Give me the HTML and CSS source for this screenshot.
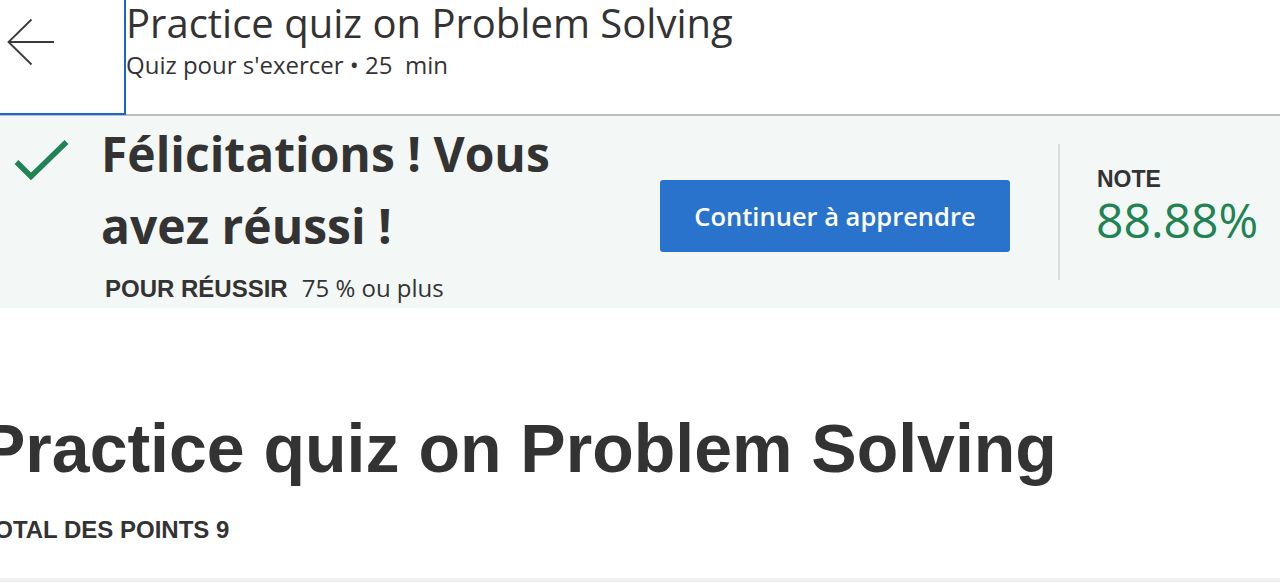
FILE: index.html
```html
<!DOCTYPE html>
<html lang="fr">
<head>
<meta charset="utf-8">
<title>Practice quiz on Problem Solving</title>
<link rel="stylesheet" href="styles.css">
</head>
<body>
<header class="topbar">
  <button class="back" aria-label="Retour">
    <svg width="60" height="80" viewBox="0 0 60 80" class="back-icon">
      <path d="M54 42 H9 M31.5 19.5 L8.5 42 L31.5 64.5" fill="none" stroke="#3a3a3a" stroke-width="1.8"/>
    </svg>
  </button>
  <div class="head-text">
    <h1 class="head-title">Practice quiz on Problem Solving</h1>
    <p class="head-sub">Quiz pour s'exercer • 25&nbsp; min</p>
  </div>
</header>

<section class="result">
  <div class="result-left">
    <div class="check-col">
      <svg class="check" width="60" height="48" viewBox="0 0 60 48">
        <polyline points="4.5,26 19,40.5 54.5,6" fill="none" stroke="#1f8354" stroke-width="5.5"/>
      </svg>
    </div>
    <div class="result-text">
      <h2 class="congrats">Félicitations ! Vous avez réussi !</h2>
      <p class="pass"><span class="pass-label">POUR RÉUSSIR</span><span class="pass-val">75 % ou plus</span></p>
    </div>
  </div>
  <button class="cta">Continuer à apprendre</button>
  <div class="divider"></div>
  <div class="note">
    <div class="note-label">NOTE</div>
    <div class="note-val">88.88%</div>
  </div>
</section>

<main class="content">
  <h2 class="quiz-title">Practice quiz on Problem Solving</h2>
  <p class="points">TOTAL DES POINTS 9</p>
</main>
<div class="footer-band"></div>
</body>
</html>
```

FILE: styles.css
```css
html, body {
  margin: 0;
  padding: 0;
  background: #ffffff;
  overflow: hidden;
}

body {
  font-family: "Open Sans", "Liberation Sans", sans-serif;
  color: #333333;
  width: 1280px;
  height: 582px;
}

.topbar {
  display: flex;
  height: 114px;
  border-bottom: 2px solid #bdbdbd;
}

.back {
  flex: 0 0 auto;
  width: 126px;
  height: 115px;
  box-sizing: border-box;
  padding: 0;
  margin: 0;
  border: 0;
  border-right: 2px solid #1566d6;
  border-bottom: 2px solid #1566d6;
  background: #ffffff;
  display: flex;
  align-items: flex-start;
  justify-content: flex-start;
  position: relative;
  z-index: 1;
}

.back-icon {
  display: block;
}

.head-text {
  display: flex;
  flex-direction: column;
}

.head-title {
  margin: 0;
  font-size: 40px;
  font-weight: 400;
  line-height: 45px;
  color: #333333;
  white-space: nowrap;
}

.head-sub {
  margin: 5px 0 0 0;
  font-size: 24px;
  line-height: 30px;
  color: #333333;
  white-space: nowrap;
}

.result {
  display: flex;
  align-items: flex-start;
  height: 192px;
  background: #f3f8f6;
}

.result-left {
  display: flex;
  width: 660px;
  flex: 0 0 auto;
}

.check-col {
  width: 101px;
  flex: 0 0 auto;
}

.check {
  display: block;
  margin: 20px 0 0 12px;
}

.result-text {
  padding-top: 2px;
}

.congrats {
  margin: 0;
  font-size: 48px;
  font-weight: 700;
  line-height: 72px;
  color: #333333;
  width: 500px;
}

.pass {
  margin: 8px 0 0 4px;
  line-height: 36px;
  white-space: nowrap;
  display: flex;
  align-items: baseline;
}

.pass-label {
  font-family: "Liberation Sans", Arial, sans-serif;
  font-weight: 700;
  font-size: 24px;
  color: #333333;
}

.pass-val {
  margin-left: 14px;
  font-size: 24px;
  color: #333333;
}

.cta {
  flex: 0 0 auto;
  margin-top: 64px;
  width: 350px;
  height: 72px;
  border: 0;
  border-radius: 3px;
  background: #2a73cc;
  color: #ffffff;
  font-family: "Open Sans", sans-serif;
  font-weight: 600;
  font-size: 25.5px;
  padding: 0;
}

.divider {
  flex: 0 0 auto;
  margin: 28px 0 0 48px;
  width: 2px;
  height: 136px;
  background: #dcdcdc;
}

.note {
  margin: 50px 0 0 37px;
}

.note-label {
  font-family: "Liberation Sans", Arial, sans-serif;
  font-weight: 700;
  font-size: 23px;
  line-height: 26px;
  color: #333333;
}

.note-val {
  margin-top: 0;
  font-size: 48px;
  line-height: 56px;
  color: #1f8354;
  margin-left: -1px;
  white-space: nowrap;
}

.content {
  margin-left: -20px;
  padding-top: 99px;
  height: 270px;
  box-sizing: border-box;
  font-family: "Liberation Sans", Arial, sans-serif;
}

.quiz-title {
  margin: 0;
  font-size: 68px;
  font-weight: 700;
  line-height: 82px;
  color: #333333;
  white-space: nowrap;
}

.points {
  margin: 25px 0 0 0;
  font-size: 24px;
  font-weight: 700;
  line-height: 31px;
  color: #333333;
  white-space: nowrap;
}

.footer-band {
  height: 30px;
  background: #f0f0f0;
}
```
